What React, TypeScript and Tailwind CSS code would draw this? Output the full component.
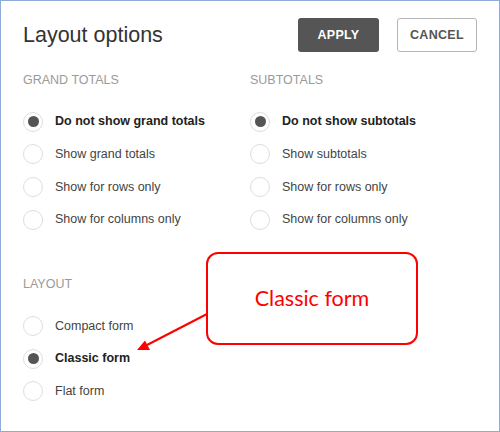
import React from "react";

type Option = { label: string; checked?: boolean };

const grandTotals: Option[] = [
  { label: "Do not show grand totals", checked: true },
  { label: "Show grand totals" },
  { label: "Show for rows only" },
  { label: "Show for columns only" },
];

const subtotals: Option[] = [
  { label: "Do not show subtotals", checked: true },
  { label: "Show subtotals" },
  { label: "Show for rows only" },
  { label: "Show for columns only" },
];

const layouts: Option[] = [
  { label: "Compact form" },
  { label: "Classic form", checked: true },
  { label: "Flat form" },
];

function Radio({ label, checked }: Option) {
  return (
    <div className="flex h-[32.6px] items-center gap-[12px]">
      <span className="flex h-[20px] w-[20px] shrink-0 items-center justify-center rounded-full border border-[#dedede] bg-white">
        {checked && <span className="h-[11px] w-[11px] rounded-full bg-[#555555]" />}
      </span>
      <span className={checked ? "text-[12.5px] font-bold text-[#222222]" : "text-[12.5px] text-[#444444]"}>
        {label}
      </span>
    </div>
  );
}

function Group({ title, options }: { title: string; options: Option[] }) {
  return (
    <div className="flex flex-col">
      <div className="mb-[18px] h-[15px] text-[12.5px] leading-[15px] text-[#9a9a9a]">{title}</div>
      {options.map((o) => (
        <Radio key={o.label} {...o} />
      ))}
    </div>
  );
}

export default function App() {
  return (
    <div
      className="relative h-[432px] w-[500px] overflow-hidden border border-[#8eaadb] bg-white"
      style={{ fontFamily: '"Liberation Sans", Arial, sans-serif' }}
    >
      <div className="flex flex-col px-[22px] pt-[17px]">
        <header className="flex items-center justify-between">
          <h1 className="text-[21.5px] leading-[34px] text-[#333333]">Layout options</h1>
          <div className="flex gap-[18px]">
            <button className="h-[34px] w-[81px] rounded-[3px] bg-[#555555] text-[12.5px] font-bold tracking-[0.3px] text-white">
              APPLY
            </button>
            <button className="h-[34px] w-[80px] rounded-[3px] border border-[#b5b5b5] bg-white text-[12.5px] font-bold tracking-[0.3px] text-[#555555]">
              CANCEL
            </button>
          </div>
        </header>

        <div className="mt-[20.5px] grid grid-cols-[227px_1fr]">
          <Group title="GRAND TOTALS" options={grandTotals} />
          <Group title="SUBTOTALS" options={subtotals} />
        </div>

        <div className="mt-[41px]">
          <Group title="LAYOUT" options={layouts} />
        </div>
      </div>

      {/* annotation callout */}
      <svg className="pointer-events-none absolute left-0 top-0" width="500" height="432">
        <line x1="206" y1="313" x2="146" y2="344" stroke="#ff0000" strokeWidth="2" />
        <polygon points="136,349 144,339.5 149,349" fill="#ff0000" />
      </svg>
      <div
        className="absolute left-[205px] top-[251px] flex h-[93px] w-[212px] items-center justify-center rounded-[12px] border-[2.5px] border-[#ff0000] bg-white"
        style={{ fontFamily: 'Lato, "Open Sans", sans-serif' }}
      >
        <span className="text-[21.5px] text-[#ff0000]">Classic form</span>
      </div>
    </div>
  );
}
